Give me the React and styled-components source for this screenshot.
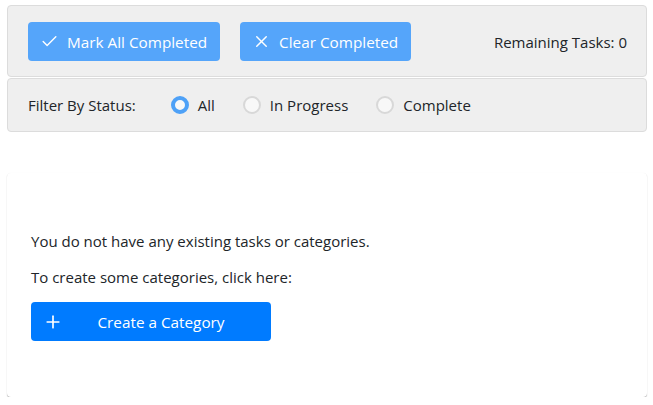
import React, { useState } from "react";
import styled, { createGlobalStyle } from "styled-components";
import { Check, X, Plus } from "lucide-react";

const GlobalStyle = createGlobalStyle`
  html, body {
    margin: 0;
    padding: 0;
    background: #ffffff;
  }
  body {
    font-family: "Open Sans", "Noto Sans", sans-serif;
    color: #212529;
  }
  * {
    box-sizing: border-box;
  }
`;

const Page = styled.div`
  padding: 5px 6px 0 7px;
  display: flex;
  flex-direction: column;
`;

const Panel = styled.div`
  background: #efefef;
  border: 1px solid #dcdcdc;
  border-radius: 4px;
  display: flex;
  align-items: center;
  padding: ${(p) => p.$padding};
  min-height: ${(p) => p.$height || "auto"};
  margin-bottom: 1px;
`;

const ActionButton = styled.button`
  display: flex;
  align-items: center;
  gap: 8px;
  height: 39px;
  padding: 0 13px 0 12px;
  margin-right: 20px;
  background: #55a5fa;
  color: #ffffff;
  border: none;
  border-radius: 4px;
  font-family: inherit;
  font-size: 15.3px;
  cursor: pointer;
`;

const Remaining = styled.span`
  margin-left: auto;
  font-size: 15px;
  color: #212529;
`;

const FilterLabel = styled.span`
  font-size: 15px;
  margin-right: 35px;
`;

const RadioOption = styled.label`
  display: flex;
  align-items: center;
  gap: 9px;
  margin-right: 28px;
  font-size: 15px;
  cursor: pointer;
`;

const RadioDot = styled.span`
  width: 18px;
  height: 18px;
  border-radius: 50%;
  background: #f8f8f8;
  border: ${(p) => (p.$checked ? "4px solid #4ea1f7" : "2px solid #d8d8d8")};
`;

const Card = styled.div`
  margin-top: 40px;
  background: #ffffff;
  border-radius: 4px;
  box-shadow: 0 1px 1px rgba(0, 0, 0, 0.3), 0 0 1px rgba(0, 0, 0, 0.06);
  padding: 56px 24px 56px 24px;
`;

const Message = styled.p`
  margin: 0 0 12px;
  font-size: 15px;
  line-height: 24px;

  & + & {
    margin-bottom: 13px;
  }
`;

const CreateButton = styled.button`
  display: flex;
  align-items: center;
  width: 240px;
  height: 39px;
  padding: 0 12px;
  background: #007bff;
  color: #ffffff;
  border: none;
  border-radius: 4px;
  font-family: inherit;
  font-size: 15.3px;
  cursor: pointer;
`;

const CreateText = styled.span`
  flex: 1;
  text-align: center;
`;

const filters = ["All", "In Progress", "Complete"];

export default function App() {
  const [filter, setFilter] = useState("All");

  return (
    <Page>
      <GlobalStyle />
      <Panel $padding="16px 19px 15px 20px">
        <ActionButton>
          <Check size={19} strokeWidth={1.8} />
          Mark All Completed
        </ActionButton>
        <ActionButton>
          <X size={19} strokeWidth={1.8} />
          Clear Completed
        </ActionButton>
        <Remaining>Remaining Tasks: 0</Remaining>
      </Panel>
      <Panel $padding="0 20px" $height="54px">
        <FilterLabel>Filter By Status:</FilterLabel>
        {filters.map((f) => (
          <RadioOption key={f} onClick={() => setFilter(f)}>
            <RadioDot $checked={filter === f} />
            {f}
          </RadioOption>
        ))}
      </Panel>
      <Card>
        <Message>You do not have any existing tasks or categories.</Message>
        <Message>To create some categories, click here:</Message>
        <CreateButton>
          <Plus size={20} strokeWidth={2} />
          <CreateText>Create a Category</CreateText>
        </CreateButton>
      </Card>
    </Page>
  );
}
